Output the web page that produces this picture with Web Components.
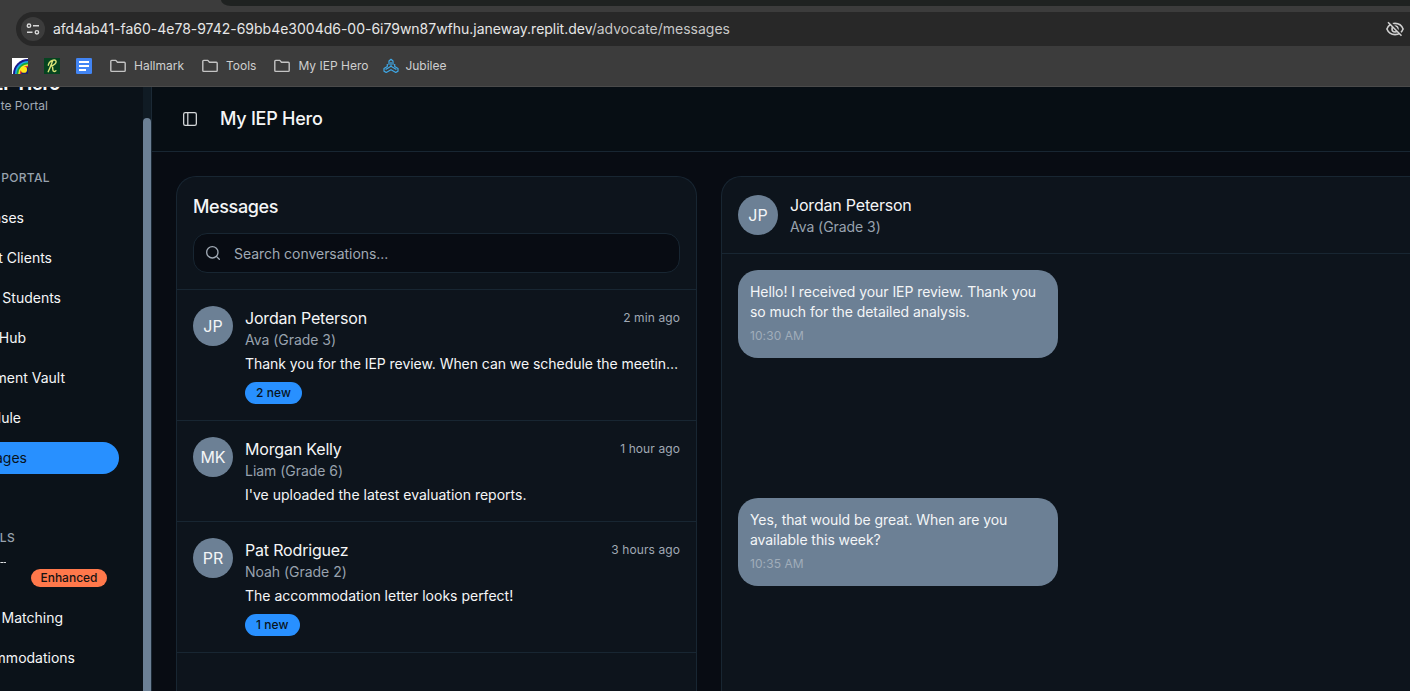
<!DOCTYPE html>
<html lang="en">
<head>
<meta charset="utf-8">
<title>My IEP Hero</title>
<style>
html, body { margin: 0; height: 100%; overflow: hidden; background: #080c13; }
body { font: 400 14px/20px Inter, "Noto Sans", sans-serif; color: #f5f6f7; display: flex; flex-direction: column; }
</style>
</head>
<body>
<browser-chrome>
  <bookmark-link label="">
    <svg width="16" height="16" viewBox="0 0 16 16"><rect width="16" height="16" fill="#fff"/><path d="M1 16A15 15 0 0 1 16 1v15z" fill="#17198c"/><path d="M3 16A13 13 0 0 1 16 3v13z" fill="#1ca5e8"/><path d="M4.600 16A11.400 11.400 0 0 1 16 4.600V16z" fill="#16a83c"/><path d="M6.200 16A9.800 9.800 0 0 1 16 6.200V16z" fill="#f3ee31"/><path d="M7.800 16A8.200 8.200 0 0 1 16 7.800V16z" fill="#e53528"/><path d="M9.200 16A6.800 6.800 0 0 1 16 9.200V16z" fill="#17206e"/><circle cx="12" cy="11.700" r="3.100" fill="#ffe81a"/></svg>
  </bookmark-link>
  <bookmark-link label="">
    <svg width="16" height="16" viewBox="0 0 16 16"><rect width="16" height="16" fill="#064420"/><path d="M4.300 7.200C4.800 4 7.700 2 10.200 2c2.300 0 2.500 2.400.7 4C9.800 7 8.200 7.700 7 7.800c2.200.2 1.600 2.400 1.900 4.300.2 1.500 1.500 1.800 3 .6M8.800 2.600C7.400 6 6.100 9.800 4.200 13.700" fill="none" stroke="#dce779" stroke-width="1.400" stroke-linecap="round"/></svg>
  </bookmark-link>
  <bookmark-link label="" last>
    <svg width="16" height="16" viewBox="0 0 16 16"><rect width="16" height="16" rx="1.300" fill="#4285f4"/><path d="M3 4h10M3 8h10M3 12h7" stroke="#fff" stroke-width="1.900"/></svg>
  </bookmark-link>
  <bookmark-link label="Hallmark" folder></bookmark-link>
  <bookmark-link label="Tools" folder></bookmark-link>
  <bookmark-link label="My IEP Hero" folder></bookmark-link>
  <bookmark-link label="Jubilee" tight>
    <svg width="16" height="16" viewBox="0 0 16 16" fill="none" stroke="#3fa9e8" stroke-width="1.200" stroke-linejoin="round"><path d="M6 6.800V3L8 1.300 10 3v3.800M8 4v4.300L2.600 11.400M8 8.300l5.400 3.100M4.300 6v2.600L1 10.600v2.600l2.200 1.200L8 11.700l4.800 2.700 2.200-1.200v-2.600l-3.300-2V6"/></svg>
  </bookmark-link>
</browser-chrome>
<portal-shell>
  <portal-sidebar slot="sidebar"></portal-sidebar>
  <conversation-list>
    <conversation-row initials="JP" name="Jordan Peterson" child="Ava (Grade 3)" time="2 min ago" badge="2 new" style="--track:-.05px">Thank you for the IEP review. When can we schedule the meeting to discuss next steps?</conversation-row>
    <conversation-row initials="MK" name="Morgan Kelly" child="Liam (Grade 6)" time="1 hour ago">I've uploaded the latest evaluation reports.</conversation-row>
    <conversation-row initials="PR" name="Pat Rodriguez" child="Noah (Grade 2)" time="3 hours ago" badge="1 new">The accommodation letter looks perfect!</conversation-row>
  </conversation-list>
  <chat-panel>
    <chat-bubble time="10:30 AM">Hello! I received your IEP review. Thank you so much for the detailed analysis.</chat-bubble>
    <chat-bubble time="10:35 AM">Yes, that would be great. When are you available this week?</chat-bubble>
  </chat-panel>
</portal-shell>
<script>
function define(tag, render) {
  customElements.define(tag, class extends HTMLElement {
    constructor() {
      super();
      this.attachShadow({ mode: 'open' });
    }
    connectedCallback() {
      this.shadowRoot.innerHTML = render(this);
    }
  });
}
const attr = (el, name) => el.getAttribute(name) || '';

define('browser-chrome', () => `
<style>
:host { display: flex; flex-direction: column; box-sizing: border-box; height: 87px; flex: none; background: #3c3c3c; border-bottom: 1px solid #4a4a4a; }
.tabs { height: 6px; margin-left: 221px; background: #1f2221; border-bottom-left-radius: 10px 6px; }
.url { display: flex; align-items: center; box-sizing: border-box; height: 34px; margin: 6px 0 0 16px; padding: 0 6px 0 5px; background: #282828; border-radius: 17px 0 0 17px; color: #e6e6e6; white-space: nowrap; letter-spacing: -.01px; }
.tune { display: grid; place-items: center; width: 24px; height: 24px; border-radius: 50%; background: #3c3c3c; margin-right: 8px; flex: none; }
.path { color: #c7c7c7; }
.eye { margin-left: auto; flex: none; }
.marks { display: flex; align-items: center; height: 40px; padding-left: 12px; }
svg { display: block; }
</style>
<div class="tabs"></div>
<div class="url">
  <span class="tune"><svg width="14" height="14" viewBox="0 0 14 14" fill="none" stroke="#dadada" stroke-width="1.400"><circle cx="3" cy="3.700" r="1.700"/><path d="M7 3.700H13M1 10.300h5.500"/><circle cx="10.900" cy="10.300" r="1.700"/></svg></span>
  <span>afd4ab41-fa60-4e78-9742-69bb4e3004d6-00-6i79wn87wfhu.janeway.replit.dev<span class="path">/advocate/messages</span></span>
  <svg class="eye" width="18" height="18" viewBox="0 0 18 18" fill="none" stroke="#cfcfcf" stroke-width="1.600"><path d="M.9 9C2.300 5.400 5.300 3.400 9 3.400s6.700 2 8.100 5.600c-1.400 3.600-4.400 5.600-8.100 5.600S2.300 12.600.9 9z"/><circle cx="9" cy="9" r="3"/><path d="M4 2l12.500 13.500" stroke="#282828" stroke-width="2"/><path d="M2 2.200l13.500 13.600"/></svg>
</div>
<div class="marks"><slot></slot></div>`);

define('bookmark-link', el => `
<style>
:host { display: flex; align-items: center; height: 20px; color: #cfcfcf; font-size: 12px; white-space: nowrap; margin-right: ${attr(el, 'label') ? 18 : 16}px; }
:host([last]) { margin-right: 18px; }
span { margin-left: ${el.hasAttribute('tight') ? 6 : 8}px; }
:host([label=""]) span { display: none; }
:host([tight]) { margin-left: -3px; }
svg { display: block; }
</style>
${el.hasAttribute('folder') ? '<svg width="16" height="16" viewBox="0 0 16 16" fill="none" stroke="#c4c4c4" stroke-width="1.400" stroke-linejoin="round"><path d="M.8 12.500v-9.200q0-.9.900-.9h4.100l1.700 1.900h6.800q.9 0 .9.900v7.300q0 .9-.9.900H1.700q-.9 0-.9-.9z"/></svg>' : '<slot></slot>'}
<span>${attr(el, 'label')}</span>`);

define('portal-shell', () => `
<style>
:host { display: flex; flex: 1; min-height: 0; }
main { flex: 1; min-width: 0; display: flex; flex-direction: column; background: #080c13; }
header { display: flex; align-items: center; box-sizing: border-box; height: 65px; flex: none; padding-left: 30px; background: #070e14; border-bottom: 1px solid #182632; }
h1 { margin: 0 0 0 22px; font-size: 18px; line-height: 28px; font-weight: 550; letter-spacing: -.25px; }
.body { flex: 1; min-height: 0; display: flex; gap: 24px; padding: 24px 0 0 24px; overflow: hidden; }
</style>
<slot name="sidebar"></slot>
<main>
  <header>
    <svg width="16" height="16" viewBox="0 0 24 24" fill="none" stroke="#d5d8da" stroke-width="1.900"><rect x="2.500" y="2.500" width="19" height="19" rx="2.500"/><path d="M8.700 3v18"/></svg>
    <h1>My IEP Hero</h1>
  </header>
  <div class="body"><slot></slot></div>
</main>`);

define('portal-sidebar', () => `
<style>
:host { display: flex; width: 152px; flex: none; box-sizing: border-box; border-right: 1px solid #1b2935; background: #0b1219; overflow: hidden; }
.list { width: 143px; height: 604px; overflow: hidden; display: flex; flex-direction: column; align-items: flex-start; }
.line { display: flex; justify-content: flex-end; align-items: center; height: 32px; margin-bottom: 8px; white-space: nowrap; flex: none; }
.brand { width: 60px; height: 28px; margin: -17px 0 -2px; font-size: 18px; font-weight: 700; letter-spacing: -.2px; }
.role { width: 48px; height: 20px; margin: 0 0 52px; color: #a0a9b4; font-size: 12px; }
.section { color: #98a2ae; font-size: 12px; font-weight: 500; letter-spacing: .35px; }
.active { box-sizing: border-box; width: 119px; padding-right: 92px; background: #2890ff; color: #081320; border-radius: 0 16px 16px 0; margin-bottom: 48px; }
.clip { align-items: flex-start; width: 107px; overflow: hidden; }
.tag { background: #ff784b; color: #161313; font-size: 12px; font-weight: 550; line-height: 18px; height: 18px; width: 76px; text-align: center; border-radius: 9px; margin-top: 7px; }
.dash { width: 6px; height: 1px; background: linear-gradient(90deg, #8d9195 1px, #e4e6e8 1px 3px, #84888c 3px 4px, #d4d6d8 4px); margin-right: 25px; }
.track { width: 8px; background: #101b24; display: flex; }
.thumb { flex: 1; margin-top: 31px; background: #6c8095; border-radius: 4px 4px 0 0; }
</style>
<div class="list">
  <div class="line brand">EP Hero</div>
  <div class="line role">te Portal</div>
  <div class="line section" style="width:50px;margin-top:-6px">PORTAL</div>
  <div class="line" style="width:24px">ases</div>
  <div class="line" style="width:52px">t Clients</div>
  <div class="line" style="width:61px">Students</div>
  <div class="line" style="width:26px">Hub</div>
  <div class="line" style="width:65px">ment Vault</div>
  <div class="line" style="width:21px">dule</div>
  <div class="line active">ages</div>
  <div class="line section" style="width:15px">LS</div>
  <div class="line clip"><span class="dash"></span><span class="tag">Enhanced</span></div>
  <div class="line" style="width:63px">Matching</div>
  <div class="line" style="width:75px">mmodations</div>
</div>
<div class="track"><div class="thumb"></div></div>`);

define('user-avatar', el => `
<style>
:host { display: grid; place-items: center; width: 40px; height: 40px; flex: none; border-radius: 50%; background: #6c8095; font-size: 16px; line-height: 24px; color: #f3f5f7; }
</style><span>${attr(el, 'initials')}</span>`);

define('conversation-list', () => `
<style>
:host { display: flex; flex-direction: column; width: 521px; flex: none; box-sizing: border-box; border: 1px solid #182632; border-bottom: 0; border-radius: 20px 20px 0 0; background: #0d141c; }
.top { padding: 16px; border-bottom: 1px solid #182632; }
h2 { margin: 0 0 12px; font-size: 18px; line-height: 28px; font-weight: 550; letter-spacing: -.36px; }
.search { display: flex; align-items: center; gap: 13px; box-sizing: border-box; height: 40px; padding: 0 11px; border: 1px solid #182632; border-radius: 14px; background: #080c13; color: #a0a9b4; letter-spacing: -.04px; }
.search span { padding-top: 2px; }
</style>
<div class="top">
  <h2>Messages</h2>
  <div class="search"><svg width="16" height="16" viewBox="0 0 24 24" fill="none" stroke="#a0a9b4" stroke-width="2" stroke-linecap="round"><circle cx="11" cy="11" r="8.500"/><path d="M21.500 21.500l-4.400-4.400"/></svg><span>Search conversations...</span></div>
</div>
<slot></slot>`);

define('conversation-row', el => `
<style>
:host { display: flex; gap: 12px; padding: 16px; border-bottom: 1px solid #182632; }
.main { flex: 1; min-width: 0; }
.head { display: flex; justify-content: space-between; align-items: center; height: 24px; }
.name { font-size: 16px; letter-spacing: -.18px; }
.time { font-size: 12px; letter-spacing: .1px; color: #a0a9b4; }
.child { color: #98a2ae; letter-spacing: -.03px; }
.text { margin-top: 4px; white-space: nowrap; overflow: hidden; text-overflow: ellipsis; letter-spacing: var(--track, 0); }
.badge { display: flex; align-items: center; width: max-content; height: 22px; margin-top: 8px; padding: 0 11px; border-radius: 11px; background: #2890ff; color: #081320; font-size: 12px; font-weight: 550; letter-spacing: .06px; }
</style>
<user-avatar initials="${attr(el, 'initials')}"></user-avatar>
<div class="main">
  <div class="head"><span class="name">${attr(el, 'name')}</span><span class="time">${attr(el, 'time')}</span></div>
  <div class="child">${attr(el, 'child')}</div>
  <div class="text"><slot></slot></div>
  ${attr(el, 'badge') ? `<div class="badge">${attr(el, 'badge')}</div>` : ''}
</div>`);

define('chat-panel', () => `
<style>
:host { display: flex; flex-direction: column; flex: 1; min-width: 0; box-sizing: border-box; border: solid #182632; border-width: 1px 0 0 1px; border-radius: 20px 0 0 0; background: #0d141c; }
.head { display: flex; align-items: center; gap: 12px; box-sizing: border-box; height: 77px; padding: 0 16px; border-bottom: 1px solid #182632; }
.name { font-size: 16px; line-height: 24px; letter-spacing: -.2px; }
.child { color: #98a2ae; letter-spacing: -.05px; }
.thread { display: flex; flex-direction: column; align-items: flex-start; gap: 140px; padding: 16px; }
</style>
<div class="head"><user-avatar initials="JP"></user-avatar><div><div class="name">Jordan Peterson</div><div class="child">Ava (Grade 3)</div></div></div>
<div class="thread"><slot></slot></div>`);

define('chat-bubble', el => `
<style>
:host { display: block; box-sizing: border-box; width: 320px; padding: 12px; border-radius: 20px; background: #6c8095; color: #f3f5f7; letter-spacing: -.065px; }
.time { margin-top: 4px; font-size: 12px; letter-spacing: .08px; color: #a0adba; }
</style>
<slot></slot><div class="time">${attr(el, 'time')}</div>`);
</script>
</body>
</html>
